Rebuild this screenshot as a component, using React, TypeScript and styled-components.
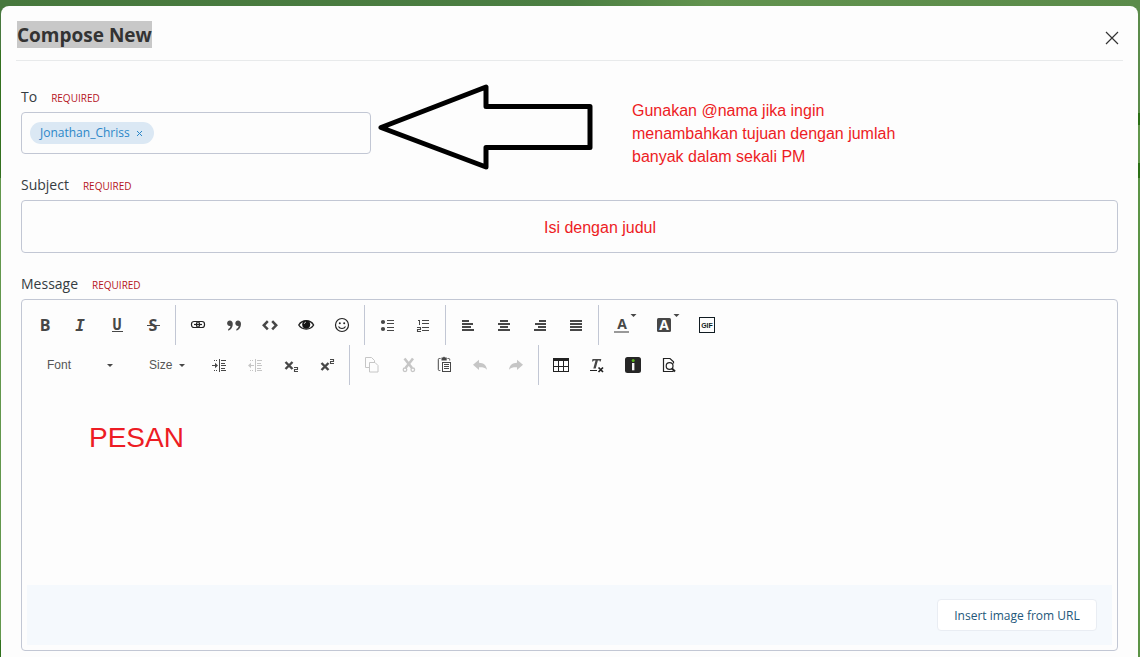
import React from "react";
import styled, { createGlobalStyle, css } from "styled-components";

const UI = `"Open Sans", "Noto Sans", sans-serif`;
const SANS = `"Liberation Sans", Arial, sans-serif`;
const INK = "#474747";
const FAINT = "#c6c6c6";

const GlobalStyle = createGlobalStyle`
  * { box-sizing: border-box; }
  html { height: 100%; overflow: hidden; }
  body {
    margin: 0;
    min-height: 100%;
    font-family: ${UI};
    color: #353c41;
    background: linear-gradient(90deg, #47783d 0, #4c7f43 50%, #62934f 62%, #5b8b4a 100%);
  }
  button, input, select, textarea { font: inherit; color: inherit; margin: 0; }
`;

const Page = styled.div`
  min-height: 100vh;
  padding: 6px 2px 0 1px;
  display: flex;
  background: linear-gradient(180deg, transparent 50px, #33701f 50px 178px, #62974c 178px 640px, #2f701c 640px) left / 1px 100% no-repeat,
    linear-gradient(180deg, transparent 113px, #2b7016 113px 125px, #62974c 125px 163px, #2b7016 163px 178px, #5c9446 178px) right / 2px 100% no-repeat;
`;

const Dialog = styled.main`
  flex: 1;
  min-width: 0;
  padding: 15px 15px 0;
  background: #fdfdfd;
  border-radius: 8px 8px 0 0;
`;

const Header = styled.header`
  display: flex;
  justify-content: space-between;
  align-items: flex-start;
  padding-bottom: 12px;
  border-bottom: 1px solid #e8eaeb;
`;

const Title = styled.h1`
  margin: 0 0 0 1px;
  padding-top: 2px;
  font-size: 19px;
  line-height: 25px;
  font-weight: 700;
  color: #333;
  background: #c8c8c8;
`;

const CloseButton = styled.button`
  height: 27px;
  padding: 6px 4px 0;
  border: 0;
  background: none;
  display: flex;
  align-items: center;
  cursor: pointer;
`;

const Form = styled.form`
  padding: 23px 5px 6px;
  display: flex;
  flex-direction: column;
`;

const RecipientRow = styled.div`
  display: flex;
  align-items: flex-start;
  margin-bottom: 5px;
`;

const Field = styled.div<{ $narrow?: boolean }>`
  display: flex;
  flex-direction: column;
  gap: 5px;
  ${(p) =>
    p.$narrow
      ? css`
          flex: 0 0 350px;
          padding-top: 3px;
        `
      : css`
          margin-bottom: 21px;
          &:last-child {
            margin-bottom: 0;
          }
        `}
`;

const LabelLine = styled.div`
  display: flex;
  align-items: baseline;
  gap: 14px;
  height: 20px;
  line-height: 20px;
`;

const Label = styled.label`
  font-size: 14px;
`;

const Required = styled.span`
  font-size: 10px;
  color: #b5151d;
`;

const outline = css`
  border: 1px solid #c2c7d4;
  border-radius: 4px;
  background: #fdfdfd;
`;

const RecipientBox = styled.div`
  ${outline}
  height: 42px;
  padding: 0 8px;
  display: flex;
  align-items: center;
  gap: 6px;
`;

const Chip = styled.span`
  display: flex;
  align-items: center;
  gap: 6px;
  height: 22px;
  padding: 0 11px 0 10px;
  border-radius: 11px;
  background: #dbe8f4;
  color: #2b87c8;
  font-size: 12px;
  line-height: 22px;
`;

const ChipRemove = styled.button`
  display: flex;
  padding: 0;
  border: 0;
  background: none;
  cursor: pointer;
`;

const RecipientInput = styled.input`
  flex: 1;
  min-width: 0;
  border: 0;
  outline: 0;
  background: none;
  font-size: 13px;
`;

const Arrow = styled.svg`
  flex: none;
  margin-left: 6px;
`;

const Note = styled.p`
  margin: 0 0 0 39px;
  padding-top: 15px;
  font-family: ${SANS};
  font-size: 16px;
  line-height: 23px;
  color: #ed1c24;
`;

const SubjectInput = styled.input`
  ${outline}
  height: 53px;
  width: 100%;
  padding: 2px 0 0 61px;
  text-align: center;
  && {
    font-family: ${SANS};
    font-size: 16px;
    color: #ed1c24;
  }
`;

const Editor = styled.div`
  ${outline}
  padding: 5px;
  display: flex;
  flex-direction: column;
`;

const ToolRow = styled.div`
  display: flex;
  flex-wrap: wrap;
`;

const ToolGroup = styled.div`
  display: flex;
  height: 40px;
  & + & {
    margin-left: 4px;
    padding-left: 4px;
    border-left: 1px solid #c2c7d4;
  }
`;

const ToolButton = styled.button<{ $menu?: boolean }>`
  width: ${(p) => (p.$menu ? 43 : 36)}px;
  height: 40px;
  padding: 0 0 0 6px;
  border: 0;
  background: none;
  display: flex;
  align-items: center;
  cursor: pointer;
  &:disabled {
    cursor: default;
  }
`;

const Combo = styled.div<{ $width: number }>`
  display: grid;
  grid-template-columns: 1fr 16px;
  align-items: center;
  width: ${(p) => p.$width}px;
  color: #555;
  svg {
    grid-area: 1 / 2;
    margin-left: -6px;
    pointer-events: none;
  }
`;

const ComboSelect = styled.select`
  grid-area: 1 / 1 / 2 / 3;
  appearance: none;
  height: 40px;
  padding: 0 0 0 20px;
  border: 0;
  background: none;
  && {
    font-family: ${SANS};
    font-size: 12px;
  }
`;

const Body = styled.textarea`
  height: 200px;
  padding: 34px 62px;
  border: 0;
  outline: 0;
  resize: none;
  background: none;
  && {
    font-family: ${SANS};
    font-size: 28px;
    line-height: 38px;
    color: #ed1c24;
  }
`;

const Footer = styled.div`
  display: flex;
  justify-content: flex-end;
  align-items: center;
  height: 60px;
  padding: 0 15px;
  background: #f5f9fd;
`;

const InsertButton = styled.button`
  height: 32px;
  width: 160px;
  padding: 0;
  border: 1px solid #e9edf3;
  border-radius: 4px;
  background: #fff;
  cursor: pointer;
  && {
    font-size: 12px;
    color: #23577a;
  }
`;

const Glyph = ({ children, width = 24 }: { children: React.ReactNode; width?: number }) => (
  <svg width={width} height="24" viewBox={`0 0 ${width} 24`} fill={INK} aria-hidden="true">
    {children}
  </svg>
);

type Bar = [x: number, y: number, w: number, h: number];
const Bars = ({ list, fill }: { list: Bar[]; fill?: string }) => (
  <g fill={fill} shapeRendering="crispEdges">
    {list.map(([x, y, width, height], i) => (
      <rect key={i} x={x} y={y} width={width} height={height} />
    ))}
  </g>
);

const Letter = ({ x = 12, y, size, family = "Open Sans", italic, fill, children }: {
  x?: number; y: number; size: number; family?: string; italic?: boolean; fill?: string; children: string;
}) => (
  <text x={x} y={y} fontSize={size} fontFamily={`"${family}", sans-serif`} fontWeight={700} fontStyle={italic ? "italic" : "normal"} textAnchor="middle" fill={fill}>
    {children}
  </text>
);

const caret = <path d="M21.5 1h6l-3 3z" />;
const quoteMark = "M7.8 7.5c1.8 0 3 1.4 3 3.4 0 3.3-1.8 5.9-4.6 6.8v-1.6c1.4-.8 2.1-1.8 2.2-3.1-1.8.4-3.3-.9-3.3-2.7 0-1.6 1.2-2.8 2.7-2.8z";
const digitTwo = (x: number, y: number) => (
  <path transform={`translate(${x} ${y})`} d="M0 .5h3.5v2h-3v2h3.5" fill="none" stroke={INK} strokeWidth="1.1" />
);
const cross = (x: number, y: number, s: number) => (
  <path d={`M${x} ${y}l${s} ${s}m0 ${-s}l${-s} ${s}`} stroke={INK} strokeWidth="2.4" fill="none" />
);
const indentLines: Bar[] = [
  [12, 6, 1, 13], [14, 7, 5, 1], [14, 10, 4, 1], [14, 12, 5, 1], [14, 15, 4, 1], [14, 17, 5, 1],
  [7, 7, 1, 1], [9, 7, 1, 1], [7, 17, 1, 1], [9, 17, 1, 1],
];

const icons = {
  bold: <Letter y={18} size={16}>B</Letter>,
  italic: <Letter x={11} y={18} size={16} family="DejaVu Sans Mono" italic>I</Letter>,
  underline: (
    <>
      <Letter y={17} size={15} family="DejaVu Sans Mono">U</Letter>
      <Bars list={[[7, 18, 11, 1]]} />
    </>
  ),
  strike: (
    <>
      <Letter y={18} size={16}>S</Letter>
      <Bars list={[[6, 12, 13, 1]]} />
    </>
  ),
  link: (
    <g fill="none" stroke="#222" strokeWidth="1.2">
      <rect x="5.5" y="8.5" width="8" height="6" rx="2.5" />
      <rect x="10.5" y="8.5" width="8" height="6" rx="2.5" />
      <path d="M8 11.5h8" />
    </g>
  ),
  quote: (
    <>
      <path d={quoteMark} />
      <path d={quoteMark} transform="translate(8.2 0)" />
    </>
  ),
  code: <path d="M9.8 8.2l-4 4.100 4 4.100M14.200 8.200l4 4.100-4 4.100" fill="none" stroke={INK} strokeWidth="2.5" />,
  eye: (
    <>
      <path d="M4.8 12C8 6.3 16.5 6.3 19.6 12 16.5 17.3 8 17.3 4.8 12z" fill="#fdfdfd" stroke="#222" strokeWidth="1.4" />
      <circle cx="12.2" cy="11.5" r="4" fill="#151515" />
      <path d="M10.3 10.8a2 2 0 0 1 1.6-1.7" stroke="#ddd" fill="none" strokeWidth=".9" />
    </>
  ),
  smile: (
    <>
      <circle cx="12" cy="12" r="6.5" fill="none" stroke="#222" strokeWidth="1.2" />
      <circle cx="9.8" cy="10.2" r="1" fill="#222" />
      <circle cx="14.2" cy="10.2" r="1" fill="#222" />
      <path d="M8.5 13.6c1.3 2.6 5.700 2.600 7 0" fill="none" stroke="#222" strokeWidth="1.1" />
    </>
  ),
  bullets: (
    <>
      <circle cx="8" cy="9" r="2.1" />
      <circle cx="8" cy="16" r="2.1" />
      <Bars list={[[12, 7, 7, 1], [12, 10, 7, 1], [12, 14, 7, 1], [12, 17, 7, 1]]} />
    </>
  ),
  numbers: (
    <>
      <Bars list={[[7, 7, 1, 1], [8, 7, 1, 5], [11, 7, 7, 1], [11, 10, 7, 1], [11, 14, 7, 1], [11, 17, 7, 1]]} />
      {digitTwo(6, 14)}
    </>
  ),
  left: <Bars list={[[6, 7, 7, 2], [6, 10, 11, 2], [6, 13, 9, 2], [6, 16, 12, 2]]} />,
  center: <Bars list={[[8, 7, 8, 2], [6, 10, 12, 2], [8, 13, 8, 2], [6, 16, 12, 2]]} />,
  right: <Bars list={[[11, 7, 7, 2], [7, 10, 11, 2], [10, 13, 8, 2], [6, 16, 12, 2]]} />,
  justify: <Bars list={[[6, 7, 12, 2], [6, 10, 12, 2], [6, 13, 12, 2], [6, 16, 12, 2]]} />,
  color: (
    <>
      <Letter x={13} y={16} size={14}>A</Letter>
      <Bars fill="#999" list={[[5, 18, 15, 2]]} />
      {caret}
    </>
  ),
  background: (
    <>
      <rect x="5" y="5" width="14" height="14" rx="1.5" />
      <Letter y={17} size={14} fill="#fff">A</Letter>
      {caret}
    </>
  ),
  gif: (
    <>
      <rect x="4.5" y="4.5" width="15" height="15" fill="#fdfdfd" stroke="#111c22" />
      <Letter y={15} size={7} family="Liberation Sans" fill="#111c22">GIF</Letter>
    </>
  ),
  indent: (
    <>
      <Bars list={[...indentLines, [5, 12, 4, 1]]} />
      <path d="M8 9.8l3 2.7-3 2.7z" />
    </>
  ),
  outdent: (
    <g fill={FAINT}>
      <Bars list={[...indentLines, [7, 12, 4, 1]]} />
      <path d="M8 9.8l-3 2.7 3 2.7z" />
    </g>
  ),
  sub: <>{cross(6.5, 9, 7)}{digitTwo(15, 14)}</>,
  sup: <>{cross(6.5, 10, 7)}{digitTwo(15, 6)}</>,
  copy: (
    <g fill="#fdfdfd" stroke={FAINT}>
      <path d="M9 14.5H5.500v-10h6l3 3v2" />
      <path d="M9.500 9.500h5.500l3 3v6.500h-8.500z" />
    </g>
  ),
  cut: (
    <g fill="none" stroke={FAINT}>
      <path d="M8.500 5.500l7.500 9.500M17 5.500L9.500 15" strokeWidth="2.6" />
      <circle cx="9" cy="16.8" r="1.8" strokeWidth="1.3" />
      <circle cx="16.8" cy="16.8" r="1.8" strokeWidth="1.3" />
    </g>
  ),
  paste: (
    <>
      <path d="M8.500 5.500H7.300q-1 0-1 1v10q0 1 1 1h1M15.500 5.500h1.200q1 0 1 1v1" fill="none" stroke={INK} />
      <path d="M9.500 4.500h1.500l1-1 1 1h1.700v3H9.500z" />
      <rect x="10.5" y="9.5" width="8" height="9" fill="#fdfdfd" stroke={INK} />
      <Bars list={[[12, 11, 5, 1], [12, 13, 5, 1], [12, 15, 5, 1]]} />
    </>
  ),
  undo: <path fill={FAINT} d="M5 11.800l6-5v3c4.500.2 7.500 2.400 8 7-1.800-2.200-4.300-2.700-8-2.600v2.800z" />,
  redo: <path fill={FAINT} d="M19 11.800l-6-5v3c-4.500.2-7.500 2.400-8 7 1.800-2.200 4.300-2.700 8-2.600v2.800z" />,
  table: <Bars fill="#222" list={[[4, 5, 16, 3], [4, 5, 1, 14], [9, 8, 1, 11], [14, 8, 1, 11], [19, 5, 1, 14], [4, 13, 16, 1], [4, 18, 16, 1]]} />,
  clear: (
    <>
      <path d="M7.500 6h8.800l-.6 2.500h-1l-.1-1.100h-1.700l-2.200 8.200h-2.400l2.200-8.200H8.800l-.8 1.100H7z" />
      <Bars fill="#222" list={[[5, 17, 7, 1]]} />
      <path d="M13.500 14.500l4.500 4.500m0-4.500L13.500 19" stroke="#222" strokeWidth="1.7" />
    </>
  ),
  info: (
    <>
      <rect x="4" y="4" width="16" height="16" rx="2.5" fill="#262626" />
      <path d="M11 10h2.400v7.300H11z" fill="#f4f4f4" />
      <circle cx="12.200" cy="7.600" r="1.500" fill="#58b21c" />
    </>
  ),
  preview: (
    <g fill="none" stroke="#222" strokeWidth="1.2">
      <path d="M16.500 18.500H6.500v-13h6.500l3.500 3.200v1.800" />
      <circle cx="12.600" cy="13" r="3.4" />
      <path d="M15 15.500l3 3" strokeWidth="2" />
    </g>
  ),
};

type IconName = keyof typeof icons;

const Tool = ({ icon, label, menu, disabled }: { icon: IconName; label: string; menu?: boolean; disabled?: boolean }) => (
  <ToolButton type="button" aria-label={label} title={label} $menu={menu} disabled={disabled}>
    <Glyph width={menu ? 30 : 24}>{icons[icon]}</Glyph>
  </ToolButton>
);

const ComboBox = ({ label, width }: { label: string; width: number }) => (
  <Combo $width={width}>
    <ComboSelect aria-label={label} defaultValue={label}>
      <option>{label}</option>
    </ComboSelect>
    <svg width="6" height="3" viewBox="0 0 6 3" fill={INK} aria-hidden="true">
      <path d="M0 0h6L3 3z" />
    </svg>
  </Combo>
);

const FieldLabel = ({ id, children }: { id: string; children: string }) => (
  <LabelLine>
    <Label htmlFor={id}>{children}</Label>
    <Required>REQUIRED</Required>
  </LabelLine>
);

export default function App() {
  return (
    <Page>
      <GlobalStyle />
      <Dialog>
        <Header>
          <Title>Compose New</Title>
          <CloseButton type="button" aria-label="Close">
            <svg width="14" height="14" viewBox="0 0 14 14" stroke="#333" strokeWidth="1.2" aria-hidden="true">
              <path d="M1 1l12 12M13 1L1 13" />
            </svg>
          </CloseButton>
        </Header>
        <Form onSubmit={(e) => e.preventDefault()}>
          <RecipientRow>
            <Field $narrow>
              <FieldLabel id="to">To</FieldLabel>
              <RecipientBox>
                <Chip>
                  Jonathan_Chriss
                  <ChipRemove type="button" aria-label="Remove Jonathan_Chriss">
                    <svg width="7" height="7" viewBox="0 0 7 7" stroke="#2b87c8" aria-hidden="true">
                      <path d="M1 1l5 5m0-5L1 6" />
                    </svg>
                  </ChipRemove>
                </Chip>
                <RecipientInput id="to" />
              </RecipientBox>
            </Field>
            <Arrow width="216" height="86" viewBox="0 0 216 86" fill="none" stroke="#000" strokeWidth="5" aria-hidden="true">
              <path d="M4 43.5L109 3v19.5h104v41H109V83z" strokeLinejoin="round" />
            </Arrow>
            <Note>
              Gunakan @nama jika ingin
              <br />
              menambahkan tujuan dengan jumlah
              <br />
              banyak dalam sekali PM
            </Note>
          </RecipientRow>
          <Field>
            <FieldLabel id="subject">Subject</FieldLabel>
            <SubjectInput id="subject" defaultValue="Isi dengan judul" />
          </Field>
          <Field>
            <FieldLabel id="message">Message</FieldLabel>
            <Editor>
              <ToolRow>
                <ToolGroup>
                  <Tool icon="bold" label="Bold" />
                  <Tool icon="italic" label="Italic" />
                  <Tool icon="underline" label="Underline" />
                  <Tool icon="strike" label="Strikethrough" />
                </ToolGroup>
                <ToolGroup>
                  <Tool icon="link" label="Link" />
                  <Tool icon="quote" label="Quote" />
                  <Tool icon="code" label="Code" />
                  <Tool icon="eye" label="Spoiler" />
                  <Tool icon="smile" label="Emoji" />
                </ToolGroup>
                <ToolGroup>
                  <Tool icon="bullets" label="Bulleted list" />
                  <Tool icon="numbers" label="Numbered list" />
                </ToolGroup>
                <ToolGroup>
                  <Tool icon="left" label="Align left" />
                  <Tool icon="center" label="Center" />
                  <Tool icon="right" label="Align right" />
                  <Tool icon="justify" label="Justify" />
                </ToolGroup>
                <ToolGroup>
                  <Tool icon="color" label="Text color" menu />
                  <Tool icon="background" label="Background color" menu />
                  <Tool icon="gif" label="Insert animation" />
                </ToolGroup>
              </ToolRow>
              <ToolRow>
                <ToolGroup>
                  <ComboBox label="Font" width={102} />
                  <ComboBox label="Size" width={72} />
                  <Tool icon="indent" label="Increase indent" />
                  <Tool icon="outdent" label="Decrease indent" disabled />
                  <Tool icon="sub" label="Subscript" />
                  <Tool icon="sup" label="Superscript" />
                </ToolGroup>
                <ToolGroup>
                  <Tool icon="copy" label="Copy" disabled />
                  <Tool icon="cut" label="Cut" disabled />
                  <Tool icon="paste" label="Paste" />
                  <Tool icon="undo" label="Undo" disabled />
                  <Tool icon="redo" label="Redo" disabled />
                </ToolGroup>
                <ToolGroup>
                  <Tool icon="table" label="Table" />
                  <Tool icon="clear" label="Remove format" />
                  <Tool icon="info" label="About" />
                  <Tool icon="preview" label="Preview" />
                </ToolGroup>
              </ToolRow>
              <Body id="message" defaultValue="PESAN" />
              <Footer>
                <InsertButton type="button">Insert image from URL</InsertButton>
              </Footer>
            </Editor>
          </Field>
        </Form>
      </Dialog>
    </Page>
  );
}
